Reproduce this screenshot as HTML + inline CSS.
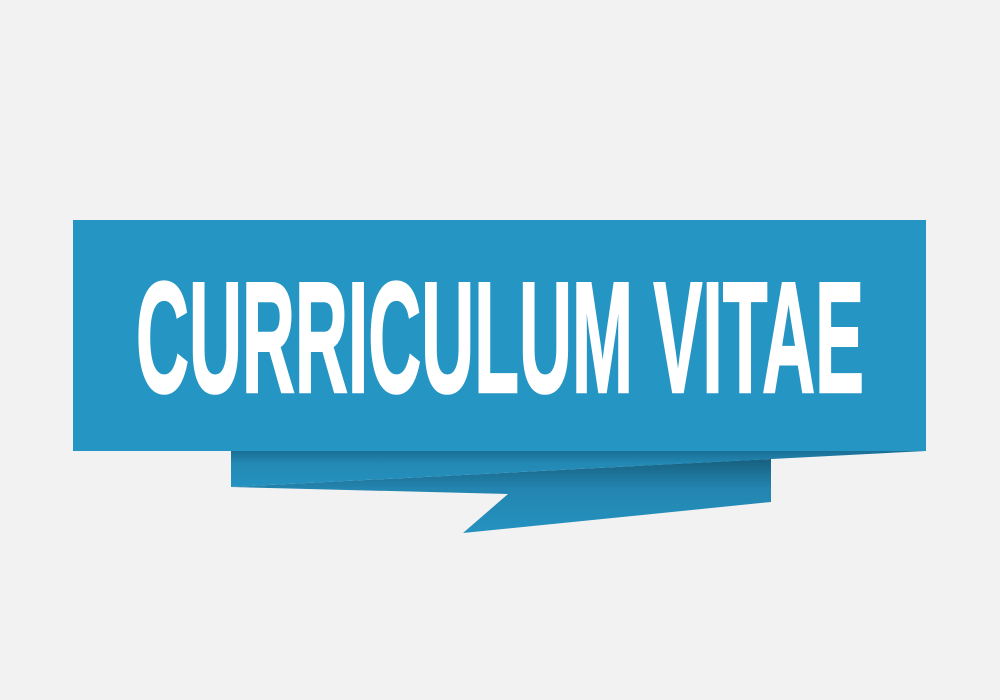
<!DOCTYPE html>
<html><head><style>
html,body{margin:0;padding:0;background:#f2f2f2;}
svg{display:block;}
</style></head><body>
<svg width="1000" height="700" viewBox="0 0 1000 700" xmlns="http://www.w3.org/2000/svg">
<defs>
<linearGradient id="ga" x1="0" y1="0" x2="0" y2="1">
<stop offset="0" stop-color="#1a6f95"/><stop offset="0.35" stop-color="#2389b5"/><stop offset="1" stop-color="#2592c0"/>
</linearGradient>
<linearGradient id="gb" x1="0" y1="0" x2="0" y2="1">
<stop offset="0" stop-color="#17607f"/><stop offset="0.4" stop-color="#2385b0"/><stop offset="1" stop-color="#2592c0"/>
</linearGradient>
</defs>
<rect width="1000" height="700" fill="#f2f2f2"/>
<polygon points="231,487 771,459 771,502 463,533 508,494" fill="url(#gb)"/>
<polygon points="231,451 926,451 231,487" fill="url(#ga)"/>
<rect x="73" y="220" width="853" height="231" fill="#2596c4"/>
<text x="136" y="392" font-family="Liberation Sans, sans-serif" font-weight="bold" font-size="158" fill="#fff" stroke="#fff" stroke-width="2.5" textLength="728" lengthAdjust="spacingAndGlyphs">CURRICULUM VITAE</text>
</svg>
</body></html>
